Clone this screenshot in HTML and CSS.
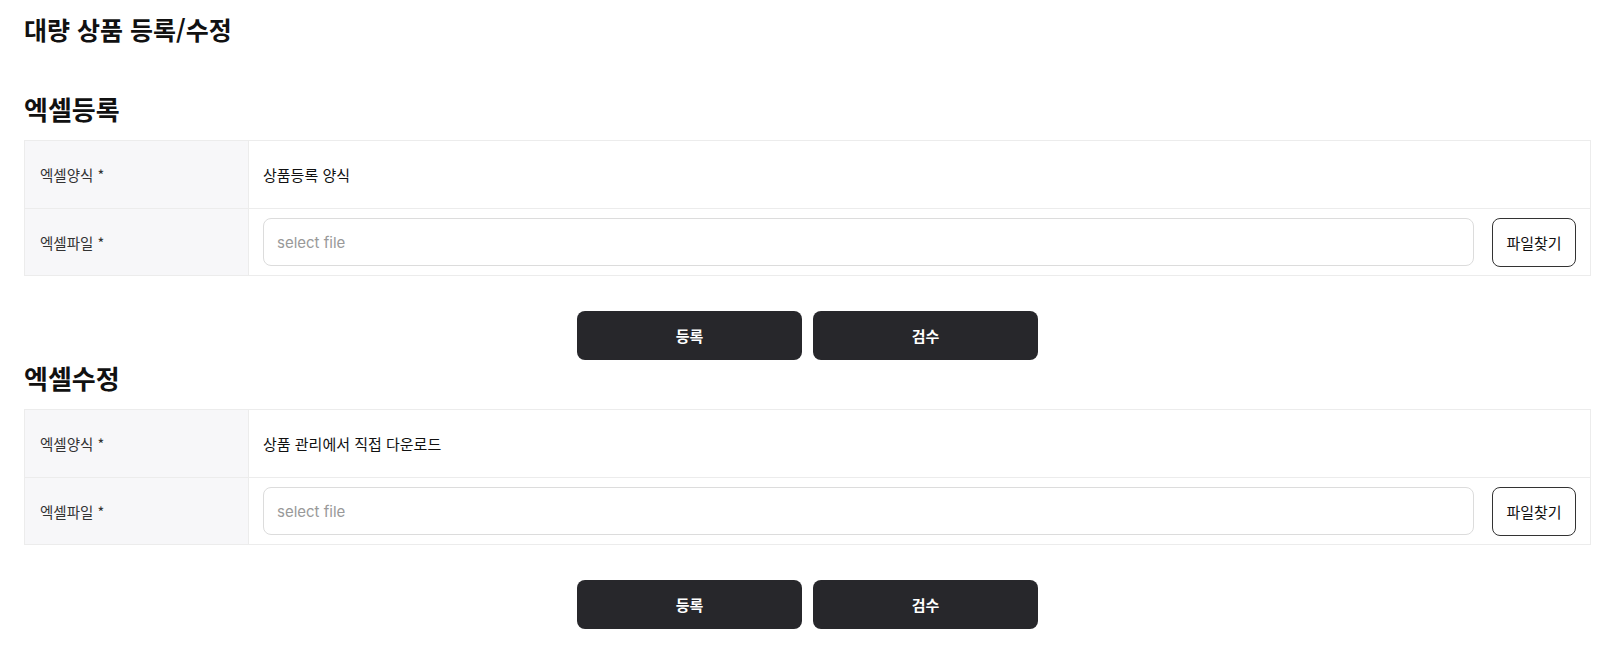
FILE: index.html
```html
<!DOCTYPE html>
<html lang="ko">
<head>
<meta charset="utf-8">
<title>대량 상품 등록/수정</title>
<link rel="stylesheet" href="styles.css">
</head>
<body>
<div class="page">
  <h1 class="page-title">대량 상품 등록/수정</h1>

  <section class="section">
    <h2 class="section-title">엑셀등록</h2>
    <div class="form-table">
      <div class="form-row">
        <div class="form-label">엑셀양식 *</div>
        <div class="form-value"><span class="value-text">상품등록 양식</span></div>
      </div>
      <div class="form-row">
        <div class="form-label">엑셀파일 *</div>
        <div class="form-value">
          <input class="file-input" type="text" placeholder="select file" readonly>
          <button class="find-btn" type="button">파일찾기</button>
        </div>
      </div>
    </div>
    <div class="actions">
      <button class="action-btn" type="button">등록</button>
      <button class="action-btn" type="button">검수</button>
    </div>
  </section>

  <section class="section">
    <h2 class="section-title">엑셀수정</h2>
    <div class="form-table">
      <div class="form-row">
        <div class="form-label">엑셀양식 *</div>
        <div class="form-value"><span class="value-text">상품 관리에서 직접 다운로드</span></div>
      </div>
      <div class="form-row">
        <div class="form-label">엑셀파일 *</div>
        <div class="form-value">
          <input class="file-input" type="text" placeholder="select file" readonly>
          <button class="find-btn" type="button">파일찾기</button>
        </div>
      </div>
    </div>
    <div class="actions">
      <button class="action-btn" type="button">등록</button>
      <button class="action-btn" type="button">검수</button>
    </div>
  </section>
</div>
</body>
</html>
```

FILE: styles.css
```css
* { box-sizing: border-box; }

body {
  margin: 0;
  background: #fff;
  color: #111;
  font-family: "Noto Sans CJK KR", "Noto Sans", sans-serif;
}

.page {
  padding: 12px 20px 0 24px;
}

.page-title {
  margin: 0;
  font-size: 25px;
  font-weight: 700;
  line-height: 34px;
  color: #111;
}

.section-title {
  margin: 3px 0 16px;
  font-size: 26px;
  font-weight: 700;
  line-height: 30px;
  color: #111;
}

.section:first-of-type .section-title {
  margin-top: 48px;
}

.form-table {
  border: 1px solid #ececec;
}

.form-row {
  display: flex;
  height: 67px;
}

.form-row + .form-row {
  border-top: 1px solid #ececec;
}

.form-label {
  flex: 0 0 224px;
  display: flex;
  align-items: center;
  padding-left: 15px;
  background: #f7f7f9;
  border-right: 1px solid #ececec;
  font-size: 14.5px;
  color: #333;
}

.form-value {
  flex: 1;
  display: flex;
  align-items: center;
  gap: 18px;
  padding: 0 14px 0 14px;
}

.value-text {
  font-size: 15px;
  color: #111;
}

.file-input {
  flex: 1;
  height: 48px;
  border: 1px solid #dcdcdc;
  border-radius: 8px;
  padding: 0 13px;
  font-family: "Inter", "Noto Sans CJK KR", sans-serif;
  font-size: 15px;
  color: #111;
  background: #fff;
  outline: none;
}

.file-input::placeholder {
  color: #999;
}

.find-btn {
  flex: 0 0 84px;
  height: 49px;
  border: 1px solid #333;
  border-radius: 8px;
  background: #fff;
  font-family: "Noto Sans CJK KR", sans-serif;
  font-size: 15px;
  color: #111;
}

.actions {
  display: flex;
  justify-content: center;
  gap: 11px;
  margin-top: 35px;
}

.action-btn {
  width: 225px;
  height: 49px;
  border: none;
  border-radius: 8px;
  background: #27272b;
  color: #fff;
  font-family: "Noto Sans CJK KR", sans-serif;
  font-size: 15px;
  font-weight: 700;
}
```
